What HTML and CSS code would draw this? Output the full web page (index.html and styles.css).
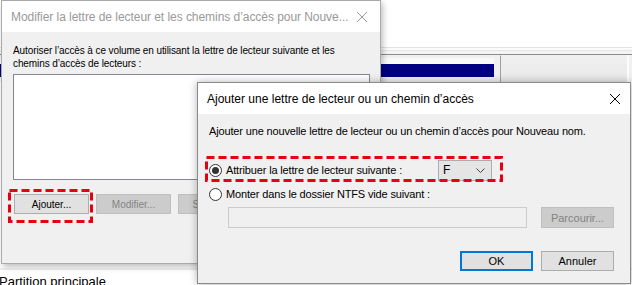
FILE: index.html
```html
<!DOCTYPE html>
<html lang="fr">
<head>
<meta charset="UTF-8" />
<title>Ajouter une lettre de lecteur</title>
<link rel="stylesheet" href="styles.css">
</head>
<body>
  <div class="desktop">
    <!-- disk management behind the dialogs -->
    <div class="app">
      <div class="app-top"></div>
      <div class="app-rule"></div>
      <div class="disk-row">
        <div class="disk-cell"><div class="disk-bar"></div></div>
        <div class="disk-rest"></div>
      </div>
      <div class="app-body"></div>
      <div class="legend">Partition principale</div>
    </div>

    <div class="win win-back">
      <div class="titlebar">
        <span class="title">Modifier la lettre de lecteur et les chemins d’accès pour Nouve...</span>
        <svg class="close" viewBox="0 0 10 10"><path d="M0 0L10 10M10 0L0 10" /></svg>
      </div>
      <div class="win-body back-body">
        <p class="label">Autoriser l’accès à ce volume en utilisant la lettre de lecteur suivante et les chemins d’accès de lecteurs :</p>
        <div class="listbox"></div>
        <div class="btn-row">
          <button class="btn">Ajouter...</button>
          <button class="btn" disabled>Modifier...</button>
          <button class="btn" disabled>Supprimer</button>
        </div>
      </div>
    </div>

    <div class="win win-front">
      <div class="titlebar">
        <span class="title">Ajouter une lettre de lecteur ou un chemin d’accès</span>
        <svg class="close" viewBox="0 0 10 10"><path d="M0 0L10 10M10 0L0 10" /></svg>
      </div>
      <div class="win-body front-body">
        <p class="desc">Ajouter une nouvelle lettre de lecteur ou un chemin d’accès pour Nouveau nom.</p>
        <div class="opt opt-letter">
          <span class="radio checked"></span>
          <span class="opt-label">Attribuer la lettre de lecteur suivante :</span>
          <div class="combo"><span>F</span>
            <svg class="chev" viewBox="0 0 9 5"><path d="M0.5 0.5L4.5 4.5L8.5 0.5" /></svg>
          </div>
        </div>
        <div class="opt opt-folder">
          <span class="radio"></span>
          <span class="opt-label">Monter dans le dossier NTFS vide suivant :</span>
        </div>
        <div class="path-row">
          <div class="field"></div>
          <button class="btn" disabled>Parcourir...</button>
        </div>
        <div class="actions">
          <button class="btn btn-default">OK</button>
          <button class="btn">Annuler</button>
        </div>
      </div>
    </div>

    <svg class="mark mark-letter" viewBox="0 0 298 26"><rect x="1.5" y="1.5" width="295" height="23" /></svg>
    <svg class="mark mark-add" viewBox="0 0 85 34"><rect x="1.5" y="1.5" width="82" height="31" /></svg>
  </div>
</body>
</html>
```

FILE: styles.css
```css
* {
  box-sizing: border-box;
}
body {
  margin: 0;
  background: #fff;
  font-family: 'Segoe UI', 'Liberation Sans', Arial, sans-serif;
  font-size: 12px;
  color: #000;
}
.desktop {
  position: relative;
  width: 632px;
  height: 285px;
  overflow: hidden;
}

/* background app */
.app {
  display: flex;
  flex-direction: column;
  height: 100%;
}
.app-top {
  height: 47px;
  background: #fff;
}
.app-rule {
  height: 8px;
  background: #f4f4f4;
  border-top: 1px solid #e2e2e2;
  border-bottom: 1px solid #8c8c8c;
  box-shadow: inset 0 2px 0 #fbfbfb, inset 0 3px 0 #e6e6e6;
}
.disk-row {
  height: 27px;
  display: flex;
  background: #f0f0f0;
}
.disk-cell {
  width: 501px;
  padding: 7px 6px 0 0;
  border-right: 1px solid #a0a0a0;
  border-top: 1px solid #f0f0f0;
}
.disk-bar {
  height: 14px;
  background: #000080;
  border-top: 1px solid #fafafa;
  box-shadow: 0 -5px 0 #f8f8f8;
}
.disk-rest {
  flex: 1;
  border-right: 2px solid #fcfcfc;
  margin-right: 3px;
  background: linear-gradient(#f0f0f0, #e9e9e9);
}
.app-body {
  flex: 1;
  background: #fff;
  border-bottom: 2px solid #f0f0f0;
}
.legend {
  height: 15px;
  padding: 4px 0 0 0;
  margin-left: -1px;
  font-size: 13px;
  line-height: 16px;
  white-space: nowrap;
}

/* windows */
.win {
  position: absolute;
  background: #f0f0f0;
  display: flex;
  flex-direction: column;
}
.win-back {
  left: 1px;
  top: 0;
  width: 380px;
  height: 264px;
  border: 1px solid #aaaaaa;
  box-shadow: 2px 3px 6px rgba(0,0,0,0.25);
}
.win-front {
  left: 197px;
  top: 82px;
  width: 434px;
  height: 202px;
  border: 1px solid #8a8a8a;
  box-shadow: 0 0 8px rgba(0,0,0,0.3);
}
.titlebar {
  height: 31px;
  flex: none;
  background: #fff;
  display: flex;
  align-items: center;
  justify-content: space-between;
  padding: 0 9px 0 9px;
}
.title {
  white-space: nowrap;
  padding-top: 1px;
}
.win-back .title {
  color: #999;
  letter-spacing: -0.05px;
}
.close {
  width: 10px;
  height: 10px;
  flex: none;
  margin-right: 1px;
}
.close path {
  stroke: #000;
  stroke-width: 1;
  fill: none;
}
.win-back .close path {
  stroke: #9a9a9a;
}
.win-back .close {
  margin-right: 4px;
}

.win-body {
  flex: 1;
  display: flex;
  flex-direction: column;
}
.btn {
  width: 75px;
  height: 21px;
  padding: 0;
  font: inherit;
  color: #000;
  background: #e1e1e1;
  border: 1px solid #adadad;
}
.btn:disabled {
  color: #838383;
  background: #cccccc;
  border-color: #bfbfbf;
}
.btn-default {
  border: 2px solid #0078d7;
}

/* back dialog */
.back-body {
  padding: 12px 10px 0 11px;
  font-size: 10px;
  letter-spacing: -0.1px;
}
.label {
  margin: 0;
  line-height: 13px;
}
.listbox {
  margin-top: 4px;
  height: 106px;
  background: #fff;
  border: 1px solid #828790;
}
.btn-row {
  display: flex;
  gap: 7px;
  margin-top: 14px;
  padding-left: 1px;
}
.btn-row .btn {
  height: 20px;
}

/* front dialog */
.front-body {
  padding: 10px 0 0 11px;
  font-size: 11px;
  letter-spacing: -0.15px;
}
.desc {
  margin: 0;
  line-height: 14px;
  white-space: nowrap;
}
.opt {
  display: flex;
  align-items: center;
  height: 22px;
}
.opt-letter {
  margin-top: 21px;
}
.opt-folder {
  margin-top: 2px;
}
.radio {
  width: 13px;
  height: 13px;
  border: 1px solid #333;
  border-radius: 50%;
  background: #fff;
  margin: 0 4px 0 0;
  flex: none;
  display: flex;
  align-items: center;
  justify-content: center;
}
.radio.checked::after {
  content: "";
  width: 7px;
  height: 7px;
  border-radius: 50%;
  background: #333;
}
.opt-label {
  white-space: nowrap;
  padding-bottom: 1px;
}
.combo {
  margin-left: auto;
  margin-right: 138px;
  width: 54px;
  height: 21px;
  flex: none;
  font-size: 12px;
  background: #e5e5e5;
  border: 1px solid #adadad;
  display: flex;
  align-items: center;
  justify-content: space-between;
  padding: 0 6px 0 4px;
}
.chev {
  width: 9px;
  height: 5px;
}
.chev path {
  stroke: #444;
  fill: none;
  stroke-width: 1;
}
.path-row {
  display: flex;
  gap: 14px;
  margin-top: 2px;
  padding-left: 19px;
}
.field {
  width: 299px;
  height: 21px;
  background: #f0f0f0;
  border: 1px solid #cccccc;
}
.path-row .btn {
  width: 73px;
}
.actions {
  display: flex;
  gap: 8px;
  margin-top: 23px;
  padding-left: 251px;
}
.actions .btn {
  width: 73px;
  height: 20px;
}

/* red annotation frames */
.mark {
  position: absolute;
  overflow: visible;
}
.mark rect {
  fill: none;
  stroke: #e60012;
  stroke-width: 3;
  stroke-dasharray: 8 4;
}
.mark-letter {
  left: 205px;
  top: 156px;
  width: 298px;
  height: 26px;
}
.mark-add {
  left: 8px;
  top: 189px;
  width: 85px;
  height: 34px;
}
```
